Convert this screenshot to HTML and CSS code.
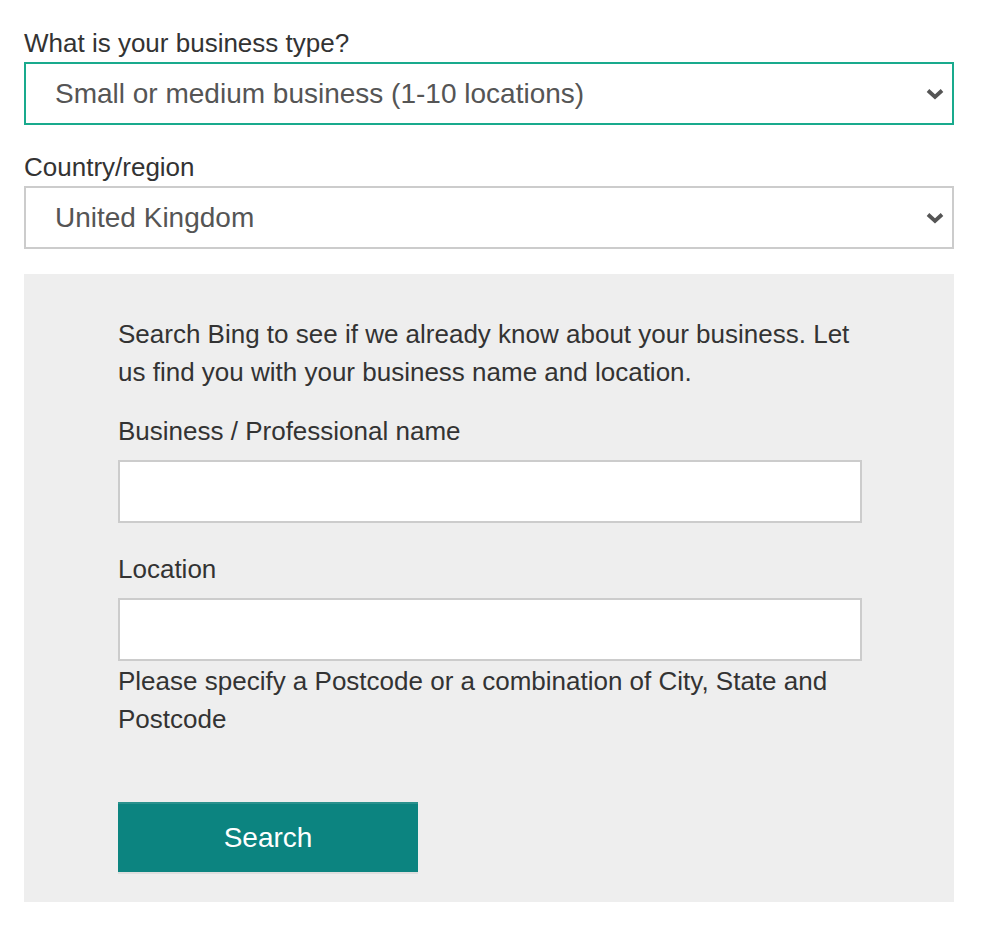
FILE: index.html
```html
<!DOCTYPE html>
<html lang="en">
<head>
<meta charset="utf-8">
<title>Business search</title>
<link rel="stylesheet" href="styles.css">
</head>
<body>
<div class="page">
  <label class="field-label" for="btype">What is your business type?</label>
  <div class="select-wrap select-wrap--first">
    <select id="btype" class="select select--active">
      <option>Small or medium business (1-10 locations)</option>
    </select>
    <svg class="chevron" width="18" height="12" viewBox="0 0 18 12" aria-hidden="true"><path d="M2 2.5 L9 9 L16 2.5" fill="none" stroke="#555" stroke-width="3.8"/></svg>
  </div>
  <label class="field-label field-label--country" for="country">Country/region</label>
  <div class="select-wrap">
    <select id="country" class="select">
      <option>United Kingdom</option>
    </select>
    <svg class="chevron" width="18" height="12" viewBox="0 0 18 12" aria-hidden="true"><path d="M2 2.5 L9 9 L16 2.5" fill="none" stroke="#555" stroke-width="3.8"/></svg>
  </div>
  <div class="panel">
    <div class="panel-inner">
      <p class="intro">Search Bing to see if we already know about your business. Let us find you with your business name and location.</p>
      <label class="field-label field-label--name" for="bname">Business / Professional name</label>
      <input id="bname" class="text-input" type="text">
      <label class="field-label field-label--loc" for="loc">Location</label>
      <input id="loc" class="text-input" type="text">
      <p class="help">Please specify a Postcode or a combination of City, State and Postcode</p>
      <button class="search-btn" type="button">Search</button>
    </div>
  </div>
</div>
</body>
</html>
```
FILE: styles.css
```css
html, body {
  margin: 0;
  padding: 0;
  background: #ffffff;
}
body {
  font-family: "Liberation Sans", Arial, Helvetica, sans-serif;
  color: #333333;
}
.page {
  width: 930px;
  padding: 24px 0 0 24px;
}
.field-label {
  display: block;
  font-size: 26px;
  line-height: 38px;
  color: #333333;
}
.field-label--country {
  margin-top: 23px;
}
.select-wrap {
  position: relative;
  height: 63px;
}
.select {
  display: block;
  width: 100%;
  height: 63px;
  box-sizing: border-box;
  margin: 0;
  border: 2px solid #cccccc;
  border-radius: 0;
  padding: 0 40px 0 29px;
  background: #ffffff;
  color: #555555;
  font-family: "Liberation Sans", Arial, Helvetica, sans-serif;
  font-size: 28px;
  -webkit-appearance: none;
  appearance: none;
  outline: none;
}
.select--active {
  border-color: #19aa8d;
}
.chevron {
  position: absolute;
  right: 10px;
  top: 26px;
  pointer-events: none;
}
.panel {
  margin-top: 25px;
  background: #eeeeee;
  padding: 41px 92px 30px 94px;
}
.panel-inner {
  display: flex;
  flex-direction: column;
  align-items: flex-start;
}
.intro, .help {
  margin: 0;
  font-size: 26px;
  line-height: 38px;
  color: #333333;
}
.field-label--name {
  margin-top: 21px;
  margin-bottom: 10px;
}
.field-label--loc {
  margin-top: 27px;
  margin-bottom: 10px;
}
.text-input {
  display: block;
  width: 744px;
  height: 63px;
  box-sizing: border-box;
  margin: 0;
  border: 2px solid #cccccc;
  border-radius: 0;
  background: #ffffff;
  font-family: "Liberation Sans", Arial, Helvetica, sans-serif;
  font-size: 26px;
  padding: 0 12px;
  outline: none;
}
.help {
  margin-top: 1px;
}
.search-btn {
  margin-top: 64px;
  width: 300px;
  height: 70px;
  box-sizing: border-box;
  border: none;
  border-top: 2px solid #2a918d;
  border-radius: 0;
  background: #0c8480;
  color: #ffffff;
  font-family: "Liberation Sans", Arial, Helvetica, sans-serif;
  font-size: 28px;
  padding: 0;
  box-shadow: 0 2px 0 #dedede;
  cursor: pointer;
}
```
